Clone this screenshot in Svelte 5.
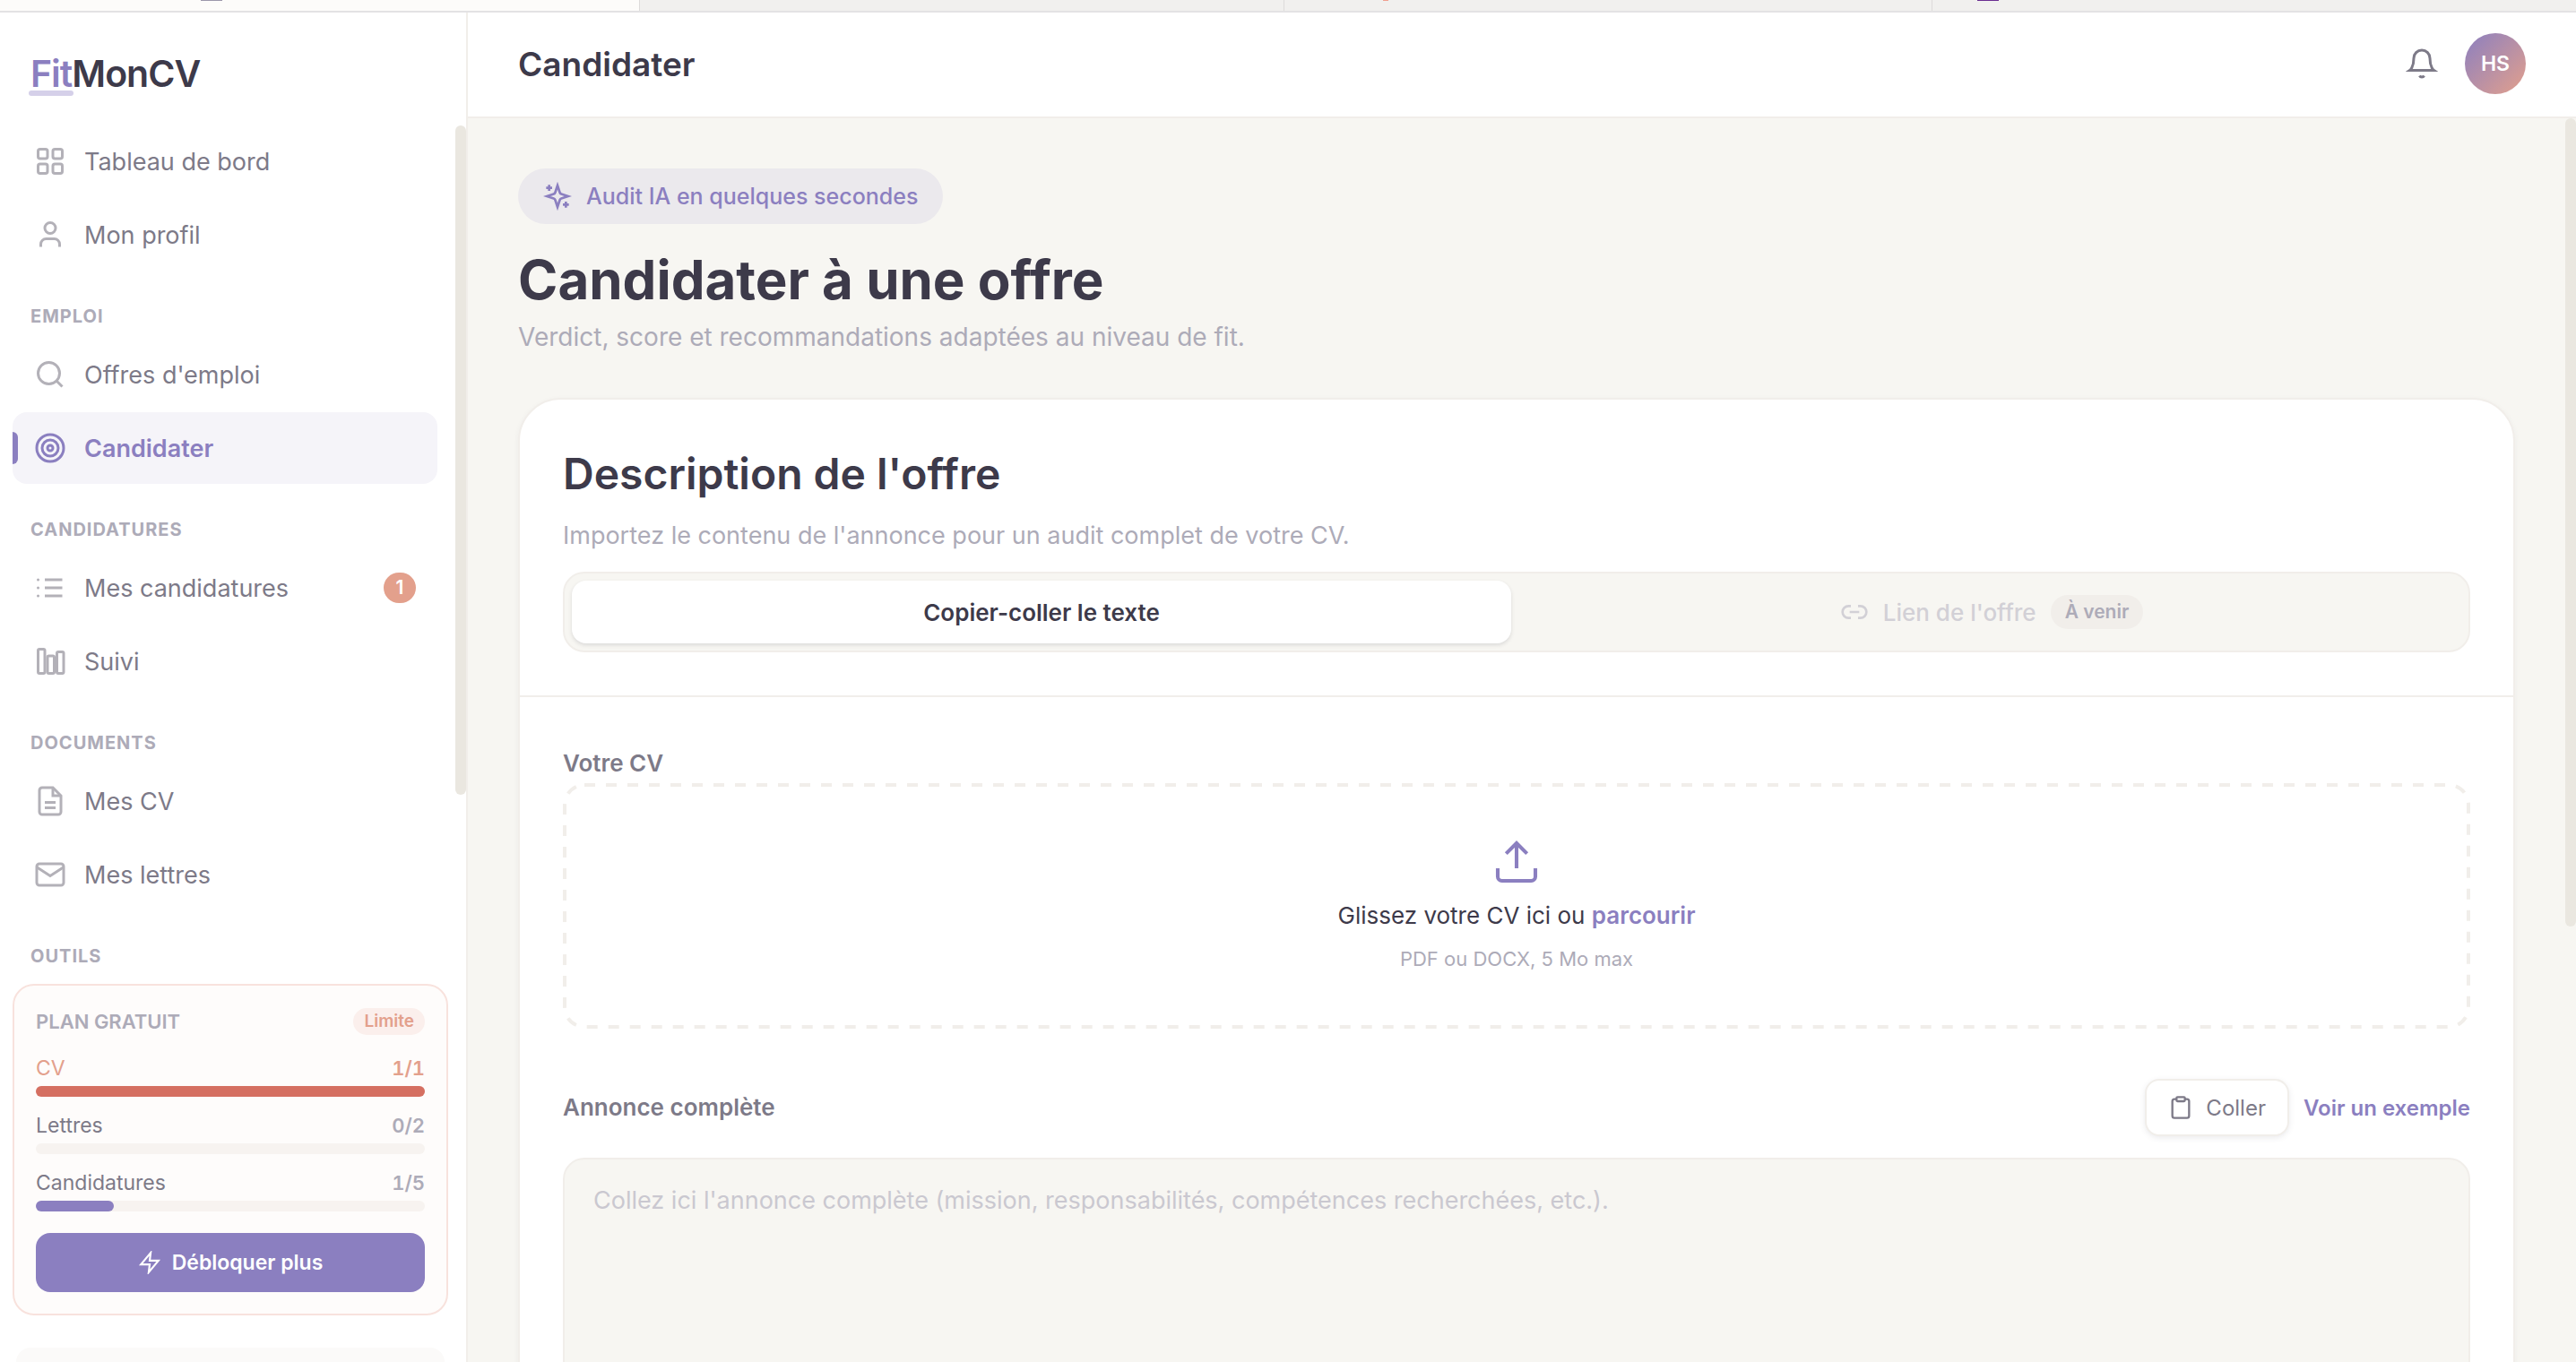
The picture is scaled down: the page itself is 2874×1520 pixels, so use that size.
<script>
  const groups = [
    {
      title: '',
      items: [
        { icon: 'grid', label: 'Tableau de bord' },
        { icon: 'user', label: 'Mon profil' }
      ]
    },
    {
      title: 'Emploi',
      items: [
        { icon: 'search', label: "Offres d'emploi" },
        { icon: 'target', label: 'Candidater', active: true }
      ]
    },
    {
      title: 'Candidatures',
      items: [
        { icon: 'list', label: 'Mes candidatures', badge: 1 },
        { icon: 'board', label: 'Suivi' }
      ]
    },
    {
      title: 'Documents',
      items: [
        { icon: 'file', label: 'Mes CV' },
        { icon: 'mail', label: 'Mes lettres' }
      ]
    },
    { title: 'Outils', items: [] }
  ];

  const quotas = [
    { label: 'CV', used: 1, max: 1 },
    { label: 'Lettres', used: 0, max: 2 },
    { label: 'Candidatures', used: 1, max: 5 }
  ];

  let offer = $state('');
</script>

{#snippet icon(name)}
  <svg class="icon {name}" viewBox="0 0 24 24" fill="none" stroke="currentColor" stroke-width="2" aria-hidden="true">
    {#if name === 'grid'}
      <rect x="3" y="3" width="7" height="7" rx="1.5" />
      <rect x="14" y="3" width="7" height="7" rx="1.5" />
      <rect x="3" y="14" width="7" height="7" rx="1.5" />
      <rect x="14" y="14" width="7" height="7" rx="1.5" />
    {:else if name === 'user'}
      <path d="M19 21v-2a4 4 0 0 0-4-4H9a4 4 0 0 0-4 4v2" />
      <circle cx="12" cy="7" r="4" />
    {:else if name === 'search'}
      <circle cx="11" cy="11" r="8" />
      <path d="m21 21-4.35-4.35" />
    {:else if name === 'target'}
      <circle cx="12" cy="12" r="10" />
      <circle cx="12" cy="12" r="6" />
      <circle cx="12" cy="12" r="2" />
    {:else if name === 'list'}
      <path d="M8 6h13M8 12h13M8 18h13" />
      <path d="M3 6h.01M3 12h.01M3 18h.01" stroke-linecap="round" />
    {:else if name === 'board'}
      <rect x="3" y="3" width="5" height="18" rx="1" />
      <rect x="10" y="8" width="5" height="13" rx="1" />
      <rect x="17" y="5" width="5" height="16" rx="1" />
    {:else if name === 'file'}
      <path d="M14 2H6a2 2 0 0 0-2 2v16a2 2 0 0 0 2 2h12a2 2 0 0 0 2-2V8z" />
      <path d="M14 2v6h6M16 13H8M16 17H8" />
    {:else if name === 'mail'}
      <rect x="2" y="4" width="20" height="16" rx="2" />
      <path d="M22 6.5 12 13 2 6.5" />
    {:else if name === 'bolt'}
      <path d="M13 2 3 14h9l-1 8 10-12h-9z" />
    {:else if name === 'bell'}
      <path d="M18 8A6 6 0 0 0 6 8c0 7-3 9-3 9h18s-3-2-3-9" />
      <path d="M13.73 21a2 2 0 0 1-3.46 0" />
    {:else if name === 'sparkles'}
      <path d="M12 3l1.9 5.8a2 2 0 0 0 1.3 1.3L21 12l-5.8 1.9a2 2 0 0 0-1.3 1.3L12 21l-1.9-5.8a2 2 0 0 0-1.3-1.3L3 12l5.8-1.9a2 2 0 0 0 1.3-1.3z" />
      <path d="M5 2.5v5M2.5 5h5M19 16.500v5M16.500 19h5" />
    {:else if name === 'link'}
      <path d="M9 17H7A5 5 0 0 1 7 7h2M15 7h2a5 5 0 1 1 0 10h-2M8 12h8" />
    {:else if name === 'upload'}
      <path d="M21 15v4a2 2 0 0 1-2 2H5a2 2 0 0 1-2-2v-4M17 8l-5-5-5 5M12 3v12" />
    {:else if name === 'clipboard'}
      <path d="M16 4h2a2 2 0 0 1 2 2v14a2 2 0 0 1-2 2H6a2 2 0 0 1-2-2V6a2 2 0 0 1 2-2h2" />
      <rect x="8" y="2" width="8" height="4" rx="1" />
    {/if}
  </svg>
{/snippet}

<div class="app">
  <div class="tabstrip" aria-hidden="true">
    <span class="browser-tab current"><i class="favicon grey"></i></span>
    <span class="browser-tab"></span>
    <span class="browser-tab"><i class="favicon orange"></i></span>
    <span class="browser-tab"><i class="favicon purple"></i></span>
  </div>

  <div class="shell">
    <aside class="sidebar">
      <a class="logo" href="#accueil"><span class="fit">Fit</span>MonCV</a>

      <nav class="nav" aria-label="Navigation principale">
        {#each groups as group}
          {#if group.title}<h2 class="group-title">{group.title}</h2>{/if}
          {#each group.items as item}
            <a class="nav-item" class:active={item.active} href="#{item.icon}">
              {@render icon(item.icon)}
              <span class="nav-label">{item.label}</span>
              {#if item.badge}<span class="count">{item.badge}</span>{/if}
            </a>
          {/each}
        {/each}
        <div class="scroll-thumb"></div>
      </nav>

      <section class="plan">
        <header class="plan-head">
          <h2>Plan gratuit</h2>
          <span class="limit">Limite</span>
        </header>
        {#each quotas as q}
          <div class="quota" class:full={q.used >= q.max}>
            <div class="quota-line"><span>{q.label}</span><b>{q.used}/{q.max}</b></div>
            <div class="track"><div class="fill" style="width: {(q.used / q.max) * 100}%"></div></div>
          </div>
        {/each}
        <button class="unlock" type="button">{@render icon('bolt')}Débloquer plus</button>
      </section>

      <div class="account"></div>
    </aside>

    <div class="main">
      <header class="topbar">
        <h1>Candidater</h1>
        <button class="bell-button" type="button" aria-label="Notifications">{@render icon('bell')}</button>
        <button class="avatar" type="button">HS</button>
      </header>

      <main class="content">
        <div class="scroll-thumb page"></div>
        <span class="pill">{@render icon('sparkles')}Audit IA en quelques secondes</span>
        <h2 class="title">Candidater à une offre</h2>
        <p class="subtitle">Verdict, score et recommandations adaptées au niveau de fit.</p>

        <section class="card">
          <header class="card-head">
            <h3>Description de l'offre</h3>
            <p>Importez le contenu de l'annonce pour un audit complet de votre CV.</p>
            <div class="tabs">
              <button class="tab selected" type="button">Copier-coller le texte</button>
              <button class="tab" type="button" disabled>
                {@render icon('link')}<span>Lien de l'offre</span><span class="soon">À venir</span>
              </button>
            </div>
          </header>

          <div class="card-body">
            <h4>Votre CV</h4>
            <div class="dropzone">
              <svg class="dashes" aria-hidden="true"><rect x="2" y="2" rx="22" /></svg>
              {@render icon('upload')}
              <p class="drop-text">Glissez votre CV ici ou <button type="button">parcourir</button></p>
              <p class="drop-hint">PDF ou DOCX, 5 Mo max</p>
            </div>

            <div class="offer-head">
              <label for="offer">Annonce complète</label>
              <button class="paste" type="button">{@render icon('clipboard')}Coller</button>
              <a class="example" href="#exemple">Voir un exemple</a>
            </div>
            <textarea
              id="offer"
              rows="10"
              bind:value={offer}
              placeholder="Collez ici l'annonce complète (mission, responsabilités, compétences recherchées, etc.)."
            ></textarea>
          </div>
        </section>
      </main>
    </div>
  </div>
</div>

<style>
  :global(body) {
    overflow: hidden;
  }

  .app {
    --ink: #3d3a4a;
    --muted: #7d7a88;
    --soft: #adabb8;
    --violet: #8b7fc0;
    --coral: #e3a08c;
    --line: #f1eeea;
    --cream: #f7f6f2;
    --thumb: #eae7e0;
    display: flex;
    flex-direction: column;
    height: 100vh;
    overflow: hidden;
    color: var(--ink);
    background: #fff;
    font-family: 'Inter', 'Open Sans', sans-serif;
    font-size: 26px;
  }

  h1, h2, h3, h4, p {
    margin: 0;
  }

  button, textarea {
    font: inherit;
    color: inherit;
    border: 0;
    padding: 0;
    background: none;
  }

  a {
    color: inherit;
    text-decoration: none;
  }

  .icon {
    flex: none;
    width: 36px;
    height: 36px;
  }

  /* Browser tab strip */
  .tabstrip {
    flex: none;
    display: grid;
    grid-template-columns: 713fr 719fr 723fr 719fr;
    height: 12px;
    border-bottom: 2px solid #e3e2e4;
    background: #f1f0ee;
  }

  .browser-tab {
    border-left: 1px solid #dddbda;
  }

  .browser-tab.current {
    border-left: 0;
    background: #fdfcfa;
  }

  .favicon {
    display: block;
    width: 24px;
    height: 1px;
    margin-left: 50px;
  }

  .favicon.grey {
    margin-left: 224px;
    background: #9d98ab;
  }

  .favicon.orange {
    width: 6px;
    margin-left: 110px;
    background: #f0a090;
  }

  .favicon.purple {
    background: #6b2f91;
  }

  .shell {
    flex: 1;
    min-height: 0;
    display: flex;
  }

  /* Sidebar */
  .sidebar {
    flex: none;
    width: 520px;
    display: flex;
    flex-direction: column;
    border-right: 2px solid var(--line);
    background: #fff;
  }

  .logo {
    flex: none;
    padding: 42px 34px 32px;
    font-size: 41px;
    line-height: 52px;
    font-weight: 600;
    letter-spacing: -1px;
  }

  .fit {
    position: relative;
    color: var(--violet);
  }

  .fit::after {
    content: '';
    position: absolute;
    left: -2px;
    right: -2px;
    bottom: 0;
    height: 6px;
    border-radius: 3px;
    background: #d5d0e9;
  }

  .nav {
    position: relative;
    flex: 1;
    min-height: 0;
    display: flex;
    flex-direction: column;
    gap: 2px;
    padding: 0 32px 0 14px;
    overflow: hidden;
  }

  .nav-item {
    position: relative;
    flex: none;
    display: flex;
    align-items: center;
    gap: 20px;
    height: 80px;
    padding: 0 24px;
    border-radius: 16px;
    overflow: hidden;
    color: var(--muted);
    font-size: 27px;
    font-weight: 400;
  }

  .nav-item .icon {
    color: #b3b1b8;
  }

  .nav-item.active,
  .nav-item.active .icon {
    color: var(--violet);
  }

  .nav-item.active {
    background: #f5f4f9;
    font-weight: 600;
  }

  .nav-item.active::before {
    content: '';
    position: absolute;
    left: 0;
    top: 22px;
    bottom: 22px;
    width: 6px;
    border-radius: 0 6px 6px 0;
    background: var(--violet);
  }

  .nav-label {
    flex: 1;
  }

  .count {
    min-width: 36px;
    height: 34px;
    border-radius: 17px;
    background: var(--coral);
    color: #fff;
    font-size: 21px;
    line-height: 34px;
    font-weight: 600;
    text-align: center;
  }

  .group-title {
    flex: none;
    padding: 35px 20px 9px;
    color: var(--soft);
    font-size: 20px;
    line-height: 28px;
    font-weight: 700;
    letter-spacing: 1px;
    text-transform: uppercase;
  }

  .scroll-thumb {
    position: absolute;
    top: 0;
    right: 0;
    width: 12px;
    height: 78%;
    border-radius: 6px;
    background: var(--thumb);
  }

  .scroll-thumb.page {
    height: 65%;
  }

  .plan {
    flex: none;
    margin: 0 20px 36px 14px;
    padding: 24px;
    border: 2px solid #f8e2dd;
    border-radius: 24px;
    background: #fefcfb;
  }

  .plan-head,
  .quota-line {
    display: flex;
    align-items: center;
    justify-content: space-between;
    height: 32px;
  }

  .plan-head {
    margin-bottom: 20px;
  }

  .plan-head h2 {
    color: var(--soft);
    font-size: 22px;
    font-weight: 600;
    text-transform: uppercase;
  }

  .limit {
    padding: 0 12px;
    border-radius: 15px;
    background: #fbefec;
    color: var(--coral);
    font-size: 19px;
    line-height: 30px;
    font-weight: 600;
  }

  .quota {
    margin-bottom: 16px;
    color: var(--muted);
    font-size: 23px;
  }

  .quota b {
    color: var(--soft);
    font-weight: 600;
    font-size: 22px;
    font-variant-numeric: tabular-nums;
  }

  .track {
    height: 12px;
    margin-top: 4px;
    border-radius: 6px;
    background: #f7f3f0;
  }

  .fill {
    height: 100%;
    border-radius: 6px;
    background: var(--violet);
  }

  .quota.full,
  .quota.full b {
    color: var(--coral);
  }

  .quota.full .fill {
    background: #d56f61;
  }

  .unlock {
    display: flex;
    align-items: center;
    justify-content: center;
    gap: 12px;
    width: 100%;
    height: 66px;
    margin-top: 24px;
    border-radius: 16px;
    background: var(--violet);
    color: #fff;
    font-size: 23px;
    font-weight: 600;
  }

  .unlock .icon {
    width: 26px;
    height: 26px;
  }

  .account {
    flex: none;
    height: 16px;
    margin: 0 24px 0 18px;
    border-radius: 24px 24px 0 0;
    background: #fbfaf9;
  }

  /* Main column */
  .main {
    flex: 1;
    min-width: 0;
    display: flex;
    flex-direction: column;
  }

  .topbar {
    flex: none;
    display: flex;
    align-items: center;
    gap: 30px;
    height: 114px;
    padding: 0 56px 2px;
    border-bottom: 2px solid var(--line);
  }

  .topbar h1 {
    flex: 1;
    font-size: 37px;
    font-weight: 600;
  }

  .bell-button {
    display: flex;
    color: var(--muted);
  }

  .avatar {
    width: 68px;
    height: 68px;
    border-radius: 50%;
    background: linear-gradient(135deg, var(--violet), var(--coral));
    color: #fff;
    font-size: 23px;
    font-weight: 600;
  }

  .content {
    position: relative;
    flex: 1;
    min-height: 0;
    display: flex;
    flex-direction: column;
    align-items: flex-start;
    padding: 56px 68px 0 56px;
    overflow: hidden;
    background: var(--cream);
  }

  .pill {
    flex: none;
    display: flex;
    align-items: center;
    gap: 16px;
    height: 62px;
    padding: 0 28px;
    border-radius: 31px;
    background: #ebe9ed;
    color: var(--violet);
    font-size: 25px;
    font-weight: 500;
  }

  .pill .icon {
    width: 32px;
    height: 32px;
  }

  .title {
    margin-top: 26px;
    font-size: 60px;
    line-height: 72px;
    font-weight: 700;
  }

  .subtitle {
    margin: 6px 0 46px;
    color: var(--soft);
    font-size: 28px;
    line-height: 44px;
  }

  .card {
    flex: none;
    align-self: stretch;
    border: 2px solid var(--line);
    border-radius: 48px;
    background: #fff;
    box-shadow: 0 2px 6px rgba(61, 58, 74, 0.05);
  }

  .card-head {
    padding: 48px;
    border-bottom: 2px solid var(--line);
  }

  .card-head h3 {
    font-size: 48px;
    line-height: 70px;
    font-weight: 600;
  }

  .card-head p {
    margin: 12px 0 18px;
    color: var(--soft);
    font-size: 27px;
    line-height: 44px;
  }

  .tabs {
    display: grid;
    grid-template-columns: 1fr 1fr;
    gap: 12px;
    padding: 8px;
    border: 2px solid var(--line);
    border-radius: 24px;
    background: var(--cream);
  }

  .tab {
    display: flex;
    align-items: center;
    justify-content: center;
    gap: 16px;
    height: 70px;
    border-radius: 16px;
    color: #d2d0d6;
    font-size: 26px;
    font-weight: 500;
  }

  .tab.selected {
    background: #fff;
    color: var(--ink);
    font-weight: 600;
    box-shadow: 0 2px 4px rgba(61, 58, 74, 0.15);
  }

  .tab .icon {
    width: 32px;
    height: 32px;
  }

  .soon {
    padding: 0 16px;
    border-radius: 19px;
    background: #f1eeea;
    color: var(--soft);
    font-size: 21px;
    line-height: 38px;
    font-weight: 600;
  }

  .card-body {
    padding: 54px 48px 48px;
  }

  .card-body h4,
  .offer-head label {
    color: var(--muted);
    font-size: 26px;
    line-height: 40px;
    font-weight: 600;
  }

  .dropzone {
    position: relative;
    display: flex;
    flex-direction: column;
    align-items: center;
    margin-top: 2px;
    padding: 60px 0;
  }

  .dashes {
    position: absolute;
    inset: 0;
    width: 100%;
    height: 100%;
  }

  .dashes rect {
    width: calc(100% - 4px);
    height: calc(100% - 4px);
    fill: none;
    stroke: #f1eeea;
    stroke-width: 4;
    stroke-dasharray: 12 12;
  }

  .icon.upload {
    width: 56px;
    height: 56px;
    stroke-width: 1.75;
    color: var(--violet);
  }

  .drop-text {
    margin-top: 10px;
    font-size: 26px;
    line-height: 44px;
  }

  .drop-text button {
    color: var(--violet);
    font-weight: 600;
  }

  .drop-hint {
    margin-top: 8px;
    color: var(--soft);
    font-size: 22px;
    line-height: 36px;
  }

  .offer-head {
    display: flex;
    align-items: center;
    gap: 16px;
    margin: 56px 0 24px;
  }

  .offer-head label {
    flex: 1;
  }

  .paste {
    display: flex;
    align-items: center;
    gap: 14px;
    height: 64px;
    padding: 0 24px;
    border: 2px solid var(--line);
    border-radius: 16px;
    background: #fff;
    box-shadow: 0 2px 6px rgba(61, 58, 74, 0.1);
    color: var(--muted);
    font-size: 24px;
  }

  .paste .icon {
    width: 28px;
    height: 28px;
  }

  .example {
    color: var(--violet);
    font-size: 24px;
    font-weight: 600;
  }

  textarea {
    display: block;
    box-sizing: border-box;
    width: 100%;
    padding: 24px 32px;
    border: 2px solid var(--line);
    border-radius: 24px;
    background: var(--cream);
    font-size: 27px;
    line-height: 44px;
    resize: none;
  }

  textarea::placeholder {
    color: #cac8d0;
  }
</style>
